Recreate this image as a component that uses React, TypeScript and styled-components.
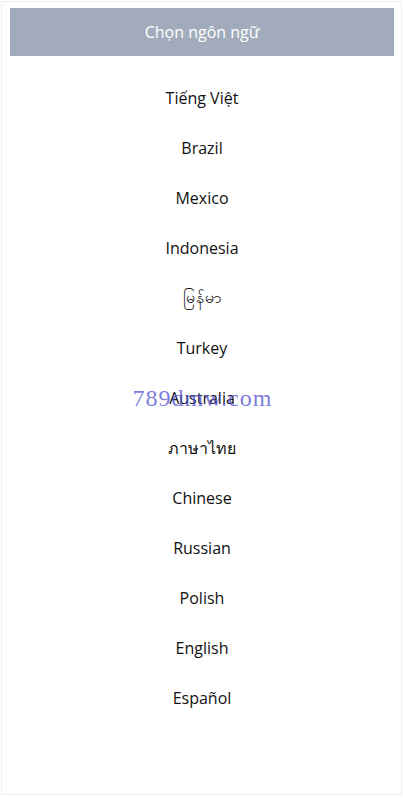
import React from 'react'
import styled, { createGlobalStyle } from 'styled-components'

const GlobalStyle = createGlobalStyle`
  html, body {
    margin: 0;
    padding: 0;
    background: #ffffff;
  }
  body {
    font-family: "Open Sans", "Noto Sans", "DejaVu Sans", sans-serif;
  }
`

const Page = styled.div`
  position: relative;
  box-sizing: border-box;
  margin: 1px;
  width: 401px;
  height: 794px;
  border: 1px solid #eeeeee;
  padding: 6px 7px 0 8px;
  background: #ffffff;
`

const Header = styled.div`
  height: 48px;
  display: flex;
  align-items: center;
  justify-content: center;
  background: #a1abbb;
  color: #ffffff;
  font-size: 16px;
`

const List = styled.ul`
  list-style: none;
  margin: 0;
  padding: 17px 0 0;
`

const Item = styled.li`
  height: 50px;
  display: flex;
  align-items: center;
  justify-content: center;
  color: #111111;
  font-size: 16px;
  cursor: pointer;
`

const Watermark = styled.div`
  position: absolute;
  left: 0;
  right: 0;
  top: 383px;
  text-align: center;
  padding-left: 2px;
  font-family: "Liberation Serif", "DejaVu Serif", serif;
  font-size: 24px;
  letter-spacing: 1px;
  color: rgba(80, 80, 210, 0.75);
  pointer-events: none;
`

const languages = [
  'Tiếng Việt',
  'Brazil',
  'Mexico',
  'Indonesia',
  'မြန်မာ',
  'Turkey',
  'Australia',
  'ภาษาไทย',
  'Chinese',
  'Russian',
  'Polish',
  'English',
  'Español',
]

const App = () => (
  <>
    <GlobalStyle />
    <Page>
      <Header>Chọn ngôn ngữ</Header>
      <List>
        {languages.map((lang) => (
          <Item key={lang}>{lang}</Item>
        ))}
      </List>
      <Watermark>789dmw.com</Watermark>
    </Page>
  </>
)

export default App
